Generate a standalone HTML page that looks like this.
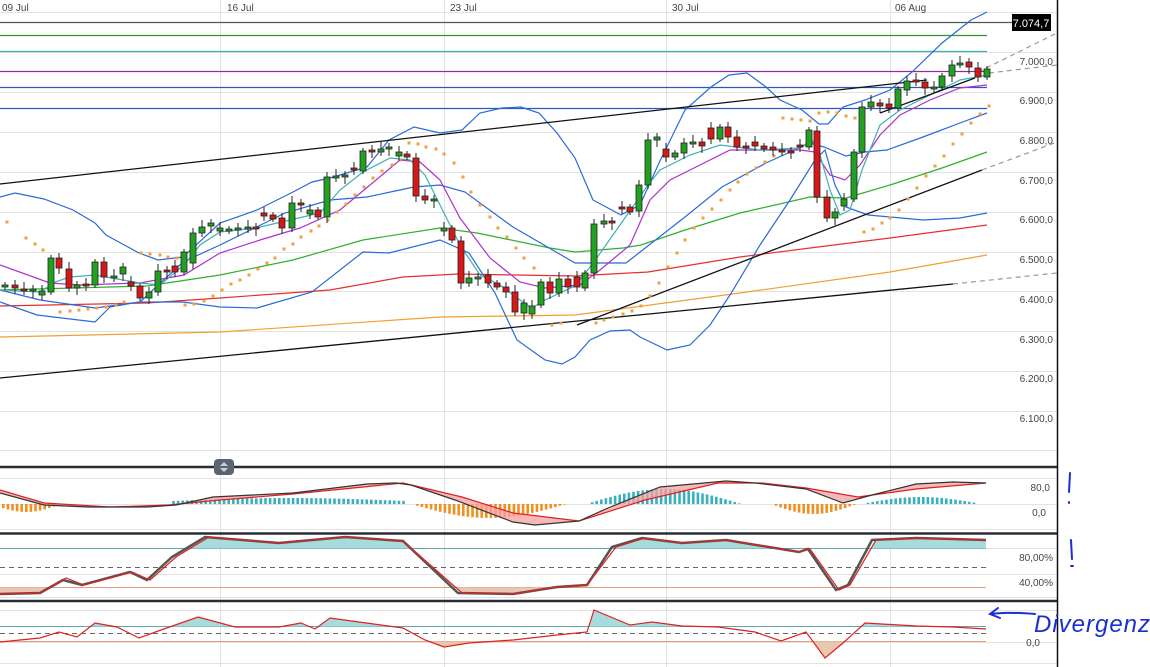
<!DOCTYPE html>
<html><head><meta charset="utf-8"><style>
html,body{margin:0;padding:0;background:#fff;width:1150px;height:667px;overflow:hidden}
svg{display:block}
text{font-family:"Liberation Sans",sans-serif}
</style></head><body>
<svg id="s" width="1150" height="667" viewBox="0 0 1150 667" xmlns="http://www.w3.org/2000/svg">
<rect width="1150" height="667" fill="#fff"/>
<g stroke="#e2e2e2" stroke-width="1" fill="none">
<path d="M0 12.5H1057M0 52.5H1057M0 92.5H1057M0 132.5H1057M0 172.5H1057M0 212.5H1057M0 252.5H1057M0 291.5H1057M0 331.5H1057M0 371.5H1057M0 411.5H1057M0 450.5H1057M0 478.5H1057M0 504.5H1057M0 529.5H1057M0 548.5H1057M0 574.5H1057M0 597.5H1057M0 610.5H1057M0 642.5H1057M0 663.5H1057"/>
<path d="M220.5 0V667M444.5 0V667M666.5 0V667M890.5 0V667"/>
</g>
<g font-size="10" fill="#444">
<text x="2" y="11">09 Jul</text><text x="227" y="11">16 Jul</text><text x="450" y="11">23 Jul</text><text x="672" y="11">30 Jul</text><text x="895" y="11">06 Aug</text>
</g>
<g font-size="10" fill="#444" text-anchor="end">
<text x="1053" y="65">7.000,0</text><text x="1053" y="104">6.900,0</text><text x="1053" y="144">6.800,0</text><text x="1053" y="184">6.700,0</text><text x="1053" y="223">6.600,0</text><text x="1053" y="263">6.500,0</text><text x="1053" y="303">6.400,0</text><text x="1053" y="343">6.300,0</text><text x="1053" y="382">6.200,0</text><text x="1053" y="422">6.100,0</text>
<text x="1050" y="491">80,0</text><text x="1046" y="516">0,0</text>
<text x="1053" y="561">80,00%</text><text x="1053" y="586">40,00%</text><text x="1040" y="646">0,0</text>
</g>
<!-- horizontal levels -->
<g fill="none" stroke-width="1.2">
<path d="M0 22.5H1012" stroke="#555"/>
<path d="M0 35.5H987" stroke="#2a9a2a"/>
<path d="M0 51.5H987" stroke="#3ab0b0"/>
<path d="M0 71.5H987" stroke="#9a2a9a"/>
<path d="M0 87.5H987" stroke="#2a5ac0"/>
<path d="M0 108.5H987" stroke="#2a5ac0"/>
</g>
<!-- MAs -->
<g fill="none" stroke-width="1.2">
<polyline stroke="#f0a030" points="0,337 220,332 440,317 575,315 740,293 890,272 987,255"/>
<polyline stroke="#e53030" points="0,306 147,303 220,298 330,290 403,277 458,274 575,276 648,272 740,257 810,248 890,238 987,225"/>
<polyline stroke="#30b030" points="0,290 147,286 220,275 293,260 363,240 440,228 477,233 550,248 575,252 623,248 641,245 685,230 740,213 810,197 846,198 890,185 942,168 987,152"/>
<polyline stroke="#2a6ad8" points="0,197 15,193 44,199 73,210 95,223 106,235 139,253 158,260 183,257 220,223 257,210 293,192 312,182 330,178 367,167 389,140 414,127 440,133 462,130 480,113 502,108 521,107 539,113 557,133 575,158 593,200 621,215 640,205 659,163 685,110 711,87 729,75 747,73 766,87 780,100 802,110 819,124 828,124 843,107 865,100 890,90 912,72 942,43 971,20 987,12"/>
<polyline stroke="#2a6ad8" points="0,290 40,300 95,308 140,302 183,262 220,245 285,213 330,200 367,197 414,187 440,185 465,192 513,227 575,263 626,263 685,217 722,187 766,163 810,143 824,147 846,156 865,152 887,150 923,137 960,123 987,113"/>
<polyline stroke="#2a6ad8" points="0,302 37,315 95,322 110,307 139,302 183,302 220,307 257,308 312,292 363,252 389,253 440,240 469,253 495,293 517,340 545,360 562,364 575,357 590,340 610,331 630,330 640,337 667,350 690,345 710,325 730,295 760,245 790,200 815,160 825,150 835,185 846,207 868,215 923,220 960,218 987,213"/>
<polyline stroke="#b030d0" points="0,265 50,283 80,285 140,283 184,275 220,253 260,240 300,228 340,210 370,185 400,160 420,162 440,180 460,218 490,258 520,282 545,288 580,285 600,270 630,245 650,200 670,180 700,165 730,150 760,150 800,150 815,152 830,175 845,180 860,165 880,135 900,115 930,100 960,88 987,85"/>
<polyline stroke="#40b0b0" points="0,290 40,292 55,282 70,277 95,275 140,283 160,285 184,265 200,245 220,232 256,228 290,220 320,213 340,190 363,172 390,158 410,160 425,175 440,205 460,245 480,275 500,285 520,300 532,308 545,300 575,286 594,262 620,225 648,185 660,170 690,155 720,145 760,150 800,148 812,140 820,155 830,190 840,215 850,210 862,170 880,125 900,110 930,95 960,80 987,75"/>
</g>
<!-- trendlines -->
<g fill="none" stroke="#111" stroke-width="1.3">
<path d="M0 184L927 80"/>
<path d="M0 378L953 284"/>
<path d="M577 325L982 170"/>
<path d="M880 113L975 78"/>
</g>
<g fill="none" stroke="#999" stroke-width="1.2" stroke-dasharray="5,4">
<path d="M978 72L1057 33"/><path d="M989 73L1057 65"/><path d="M982 170L1057 142"/><path d="M953 284L1057 273"/>
</g>
<g id="sar" fill="#f0a040"></g>
<g id="cd"></g>
<rect x="1012" y="14" width="39" height="17" fill="#000"/>
<text x="1031" y="27" font-size="11" fill="#fff" text-anchor="middle">7.074,7</text>
<!-- panel separators -->
<g stroke="#2a2e33" stroke-width="2.5">
<path d="M0 467H1057M0 533.5H1057M0 601H1057"/>
</g>
<rect x="214" y="459" width="20" height="16" rx="4" fill="#5a6472"/>
<path d="M220 466l4-4 4 4zM220 468l4 4 4-4z" fill="#c8cfd8"/>
<!-- MACD -->
<g id="hist"></g>
<path fill="#f4a0a0" opacity=".75" d="M0 490 44 503 110 507 169 505 220 500 293 494 403 483 462 497 513 513 579 521 608 508 660 487 726 481 755 483 806 489 843 503 872 495 916 484 953 482 986 483 916 489 858 497 806 488 762 483 718 483 645 500 579 521 535 525 513 522 455 500 411 485 396 483 367 484 293 493 213 497 176 505 147 507 88 507 44 505 0 493Z"/>
<polyline fill="none" stroke="#e02020" stroke-width="1.2" points="0,490 44,503 110,507 169,505 220,500 293,494 403,483 462,497 513,513 579,521 645,500 718,483 762,483 806,488 858,497 916,489 986,483"/>
<polyline fill="none" stroke="#333" stroke-width="1.2" points="0,493 44,505 88,507 147,507 176,505 213,497 293,493 367,484 396,483 411,485 455,500 513,522 535,525 579,521 608,508 660,487 726,481 755,483 806,489 843,503 872,495 916,484 953,482 986,483"/>
<!-- Stoch -->
<path d="M0 587.5H986" stroke="#e0a080" stroke-width="1"/>
<path d="M0 548.5H986" stroke="#5aa8a8" stroke-width="1"/>
<path d="M0 567.5H986" stroke="#666" stroke-dasharray="5,4"/>
<clipPath id="ca"><rect x="0" y="533" width="1057" height="15.5"/></clipPath>
<clipPath id="cb"><rect x="0" y="587.5" width="1057" height="13"/></clipPath>
<g clip-path="url(#ca)"><path fill="#a8dcdc" d="M0 548.5 0 594 40 593 66 578 84 585 132 572 150 580 176 557 209 537 279 543 345 537 403 541 462 593 513 594 557 587 587 585 616 547 645 538 682 543 726 540 799 552 810 549 839 590 850 585 876 540 916 538 953 539 986 540 986 548.5Z"/></g>
<g clip-path="url(#cb)"><path fill="#e8c8b0" d="M0 587.5 0 594 40 593 66 578 84 585 132 572 150 580 176 557 209 537 279 543 345 537 403 541 462 593 513 594 557 587 587 585 616 547 645 538 682 543 726 540 799 552 810 549 839 590 850 585 876 540 916 538 953 539 986 540 986 587.5Z"/></g>
<polyline fill="none" stroke="#555" stroke-width="2.5" points="0,594 40,593 63,580 82,585 130,572 147,580 172,557 205,537 279,543 345,537 403,541 458,593 513,594 557,587 587,585 612,547 642,538 682,543 726,540 799,552 808,549 836,590 848,585 872,540 916,538 953,539 986,540"/>
<polyline fill="none" stroke="#e02020" stroke-width="1.2" points="0,594 40,593 66,578 84,585 132,572 150,580 176,557 209,537 279,543 345,537 403,541 462,593 513,594 557,587 587,585 616,547 645,538 682,543 726,540 799,552 810,549 839,590 850,585 876,540 916,538 953,539 986,540"/>
<!-- bottom osc -->
<path d="M0 641.5H986" stroke="#e0a080"/>
<path d="M0 626.5H986" stroke="#5aa8a8"/>
<path d="M0 633.5H986" stroke="#666" stroke-dasharray="5,4"/>
<clipPath id="cc"><rect x="0" y="601" width="1057" height="25.5"/></clipPath>
<clipPath id="cd2"><rect x="0" y="641.5" width="1057" height="22"/></clipPath>
<g clip-path="url(#cc)"><path fill="#a8dcdc" id="o1"/></g>
<g clip-path="url(#cd2)"><path fill="#e8c8b0" id="o2"/></g>
<polyline id="o3" fill="none" stroke="#e02020" stroke-width="1.2"/>
<path d="M1057.5 0V667" stroke="#111" stroke-width="1.5"/>
<!-- handwriting -->
<g stroke="#1a2fd0" stroke-width="2" fill="none" stroke-linecap="round">
<path d="M1070 473 1069 492"/><path d="M1069 502v1"/>
<path d="M1071 540 1072 559"/><path d="M1071 566h2"/>
<path d="M1035 614C1010 612 1000 613 990 614M998 608 990 614 1000 618"/>
</g>
<text x="1034" y="632" font-size="24" fill="#1a2fd0" font-style="italic" font-family="Liberation Sans,sans-serif" textLength="116">Divergenz</text>
</svg>
<script>
var NS="http://www.w3.org/2000/svg";
function el(p,t,a){var e=document.createElementNS(NS,t);for(var k in a)e.setAttribute(k,a[k]);p.appendChild(e);return e;}
var C=[[5,285,287,'g'],[15,285,288,'r'],[24,289,291,'r'],[33,289,291,'g'],[42,291,295,'g'],[51,258,292,'g'],[59,258,268,'r'],[69,269,288,'r'],[77,285,288,'g'],[86,284,286,'r'],[95,262,285,'g'],[104,262,277,'r'],[114,276,278,'g'],[123,267,274,'g'],[131,282,286,'r'],[140,286,298,'r'],[149,292,298,'g'],[158,271,292,'g'],[167,270,272,'r'],[175,266,272,'r'],[184,252,272,'g'],[193,233,263,'g'],[202,227,233,'g'],[211,223,226,'g'],[220,228,231,'g'],[229,229,231,'g'],[238,228,230,'g'],[248,227,229,'g'],[256,227,229,'r'],[264,213,216,'r'],[273,215,219,'r'],[282,218,228,'r'],[292,203,228,'g'],[301,203,205,'r'],[310,210,214,'g'],[318,210,217,'r'],[327,177,217,'g'],[336,176,178,'g'],[345,175,177,'g'],[354,168,170,'r'],[363,151,171,'g'],[372,150,152,'r'],[381,149,152,'g'],[389,147,149,'g'],[399,152,156,'g'],[407,154,157,'r'],[416,158,196,'r'],[425,196,200,'r'],[434,199,201,'g'],[444,228,231,'g'],[452,228,240,'r'],[461,241,283,'r'],[469,278,283,'g'],[478,277,279,'g'],[488,275,283,'r'],[497,283,287,'r'],[506,287,292,'r'],[515,292,312,'r'],[524,303,313,'g'],[532,306,314,'g'],[541,282,305,'g'],[550,282,293,'r'],[559,279,293,'g'],[568,279,287,'r'],[577,277,287,'r'],[585,273,288,'g'],[594,224,273,'g'],[604,221,224,'g'],[612,221,223,'r'],[622,207,209,'r'],[630,207,212,'r'],[639,185,211,'g'],[648,140,185,'g'],[657,137,140,'g'],[666,149,157,'r'],[675,153,157,'g'],[684,143,153,'g'],[693,142,144,'g'],[702,142,146,'r'],[711,128,139,'r'],[720,127,139,'g'],[728,127,137,'r'],[737,137,147,'r'],[746,146,147,'r'],[755,142,146,'r'],[764,146,149,'r'],[773,147,150,'r'],[782,150,152,'r'],[791,151,152,'r'],[800,145,147,'r'],[809,130,147,'g'],[817,131,197,'r'],[827,197,218,'r'],[835,212,218,'g'],[844,199,206,'g'],[854,152,199,'g'],[862,107,152,'g'],[871,102,107,'g'],[880,103,106,'r'],[889,104,108,'r'],[898,89,108,'g'],[907,81,90,'g'],[916,80,82,'r'],[925,82,88,'r'],[934,87,88,'g'],[942,76,87,'g'],[952,65,76,'g'],[960,63,64,'g'],[969,62,67,'r'],[978,68,77,'r'],[987,69,77,'g']];
var cd=document.getElementById('cd');
C.forEach(function(c,i){var x=c[0],t=c[1],b=c[2];var w=(i*7)%5+3;
el(cd,'line',{x1:x,x2:x,y1:t-w,y2:b+((i*3)%5)+3,stroke:'#222','stroke-width':1});
el(cd,'rect',{x:x-3,y:t,width:6,height:Math.max(b-t,2),fill:c[3]=='g'?'#22a022':'#d81818',stroke:'#222','stroke-width':0.8});});
var S=[[7,222],[26,238],[35,244],[43,250],[60,312],[70,311],[79,310],[88,309],[97,308],[106,307],[116,305],[124,302],[141,253],[150,254],[160,255],[168,257],[177,258],[185,305],[194,304],[204,301],[213,296],[222,290],[231,284],[240,280],[249,275],[258,269],[267,263],[275,258],[284,249],[293,244],[301,237],[311,231],[319,226],[328,220],[337,212],[346,204],[355,195],[364,187],[373,178],[382,171],[392,165],[400,160],[409,143],[418,144],[426,147],[436,149],[444,154],[454,163],[463,177],[471,192],[480,205],[490,217],[498,228],[507,237],[516,248],[524,258],[534,268],[552,325],[561,323],[596,323],[604,320],[613,317],[623,314],[632,311],[641,306],[650,296],[659,283],[668,267],[677,253],[685,240],[694,228],[703,218],[712,209],[721,200],[730,190],[738,182],[747,174],[756,168],[765,162],[774,156],[783,118],[792,119],[801,120],[810,121],[819,113],[828,112],[837,113],[846,116],[855,118],[864,232],[873,229],[882,223],[890,218],[899,210],[908,199],[917,188],[926,176],[935,166],[944,156],[953,144],[962,134],[971,123],[980,114],[989,106]];
var sg=document.getElementById('sar');S.forEach(function(p){el(sg,'rect',{x:p[0]-1.5,y:p[1]-1.5,width:3,height:3});});
var hg=document.getElementById('hist');
function hv(x){var v=0;
if(x<60)v=-8*Math.sin(Math.PI*(x+10)/70);
else if(x>=170&&x<405)v=3+3*Math.sin(Math.PI*(x-170)/235);
else if(x>=410&&x<565)v=-14*Math.sin(Math.PI*(x-410)/155);
else if(x>=585&&x<740)v=15*Math.sin(Math.PI*(x-585)/155);
else if(x>=770&&x<855)v=-10*Math.sin(Math.PI*(x-770)/85);
else if(x>=865&&x<975)v=6*Math.sin(Math.PI*(x-865)/110)+1;
return v;}
for(var x=2;x<986;x+=4.6){var v=hv(x);if(Math.abs(v)<0.5)continue;
el(hg,'rect',{x:x,y:v>0?504-v:504,width:2.6,height:Math.abs(v),fill:v>0?'#38b0c0':'#f09020'});}
var O="0,642 40,638 59,632 77,637 95,623 117,627 139,638 161,630 198,617 235,627 279,627 301,623 315,629 330,618 359,622 403,628 425,640 444,647 469,643 513,640 557,635 587,632 594,610 630,625 652,622 682,626 718,627 755,632 781,641 806,632 825,658 843,643 865,623 916,626 953,627 986,629";
document.getElementById('o3').setAttribute('points',O);
var d="M"+O.replace(/ /g," L");
document.getElementById('o1').setAttribute('d',d+" L986 626.5 L0 626.5Z");
document.getElementById('o2').setAttribute('d',d+" L986 641.5 L0 641.5Z");
</script>
</body></html>
